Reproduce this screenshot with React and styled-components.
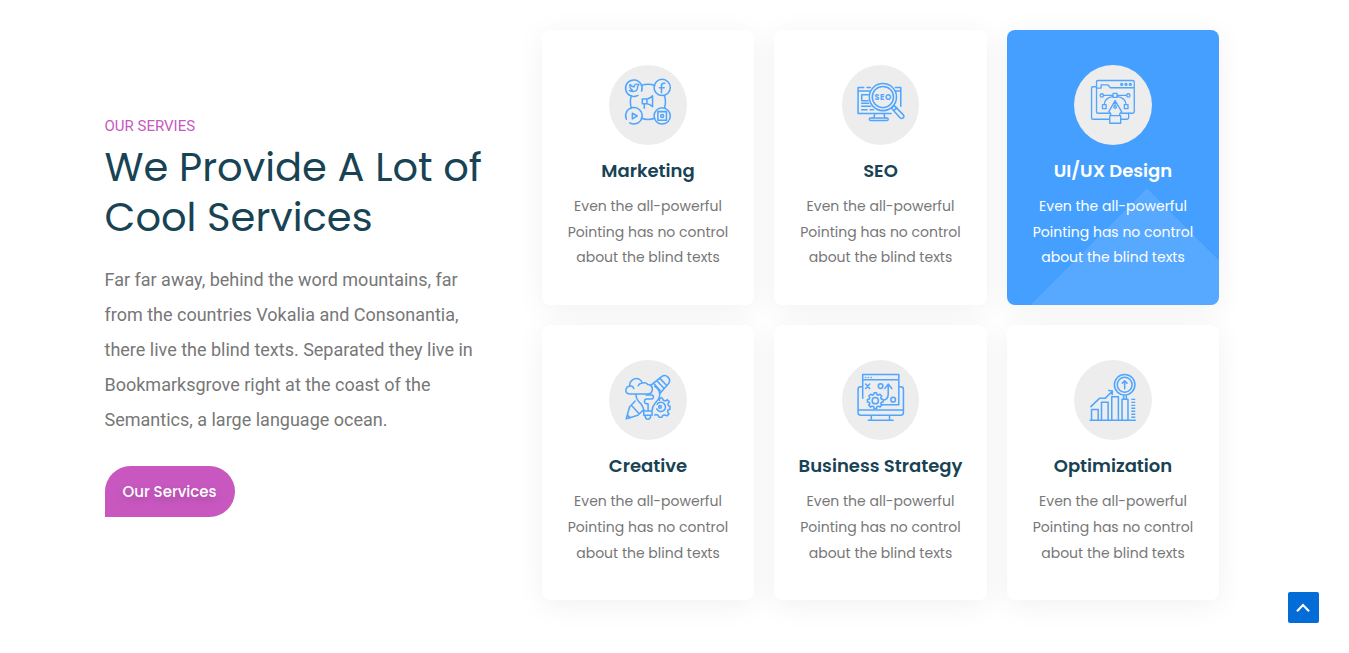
import React from "react";
import styled, { createGlobalStyle, css } from "styled-components";

const GlobalStyle = createGlobalStyle`
  * { box-sizing: border-box; }
  body { margin: 0; background: #fff; overflow: hidden; }
`;

const display = `Poppins, Inter, "Open Sans", sans-serif`;

const Page = styled.main`
  position: relative;
  height: 653px;
  overflow: hidden;
  padding: 30px 129.75px 0 104.5px;
  display: flex;
  justify-content: space-between;
`;

const Intro = styled.section`
  width: 390px;
  padding-top: 84px;
`;

const Eyebrow = styled.div`
  font: 400 15px/24px Roboto, sans-serif;
  color: #c858c0;
  white-space: nowrap;
`;

const Heading = styled.h2`
  margin: 4px 0 20px;
  font: 400 40px/50px ${display};
  color: #184354;
`;

const Line = styled.span`
  display: block;
  white-space: nowrap;
`;

const Lead = styled.p`
  margin: 0 0 29px;
  font: 400 18px/35px Roboto, sans-serif;
  color: #777;
`;

const ServicesButton = styled.button`
  display: block;
  width: 130px;
  height: 51px;
  padding: 0;
  border: 0;
  border-radius: 26px 26px 26px 0;
  background: #c858c0;
  color: #fff;
  font: 500 15px/51px ${display};
  text-shadow: 0 3px 8px rgba(0, 0, 0, 0.2);
  white-space: nowrap;
`;

const Grid = styled.section`
  display: grid;
  grid-template-columns: repeat(3, 212.5px);
  grid-auto-rows: 275.2px;
  gap: 20px;
  align-content: start;
`;

const Card = styled.article`
  position: relative;
  overflow: hidden;
  padding-top: 35px;
  display: flex;
  flex-direction: column;
  align-items: center;
  border-radius: 8px;
  background: #fff;
  color: #777;
  box-shadow: 0 5px 30px rgba(0, 0, 0, 0.06);
  ${(p) =>
    p.$active &&
    css`
      background: #459fff;
      color: #fff;
      &::before {
        content: "";
        position: absolute;
        left: 40.5px;
        top: 200px;
        width: 200px;
        height: 200px;
        transform: rotate(45deg);
        background: rgba(255, 255, 255, 0.1);
      }
    `}
`;

const IconDisc = styled.div`
  width: 77.5px;
  height: 80px;
  flex: none;
  border-radius: 50%;
  background: #ededed;
  svg { display: block; width: 77.5px; height: 80px; }
`;

const CardTitle = styled.h3`
  position: relative;
  margin: 12px 0 9px;
  font: 600 18px/28px ${display};
  white-space: nowrap;
  color: ${(p) => (p.$active ? "#fff" : "#184354")};
`;

const CardText = styled.p`
  position: relative;
  margin: 0;
  font: 400 14px/25.7px ${display};
  text-align: center;
`;

const ToTop = styled.button`
  position: absolute;
  right: 30px;
  bottom: 30px;
  width: 31px;
  height: 31px;
  padding: 0;
  border: 0;
  border-radius: 2px;
  background: #046cd6;
  svg { display: block; }
`;

const Glyph = ({ x, children }) => (
  <svg viewBox={`${x} 15 234 240`} fill="none" stroke="#4fa5ff" strokeWidth="4.6" strokeLinecap="round" strokeLinejoin="round">
    {children}
  </svg>
);

const gear = (cx, cy, r, depth, teeth) => {
  const pts = [];
  for (let i = 0; i < teeth; i++) {
    [[-0.32, r - depth], [-0.2, r], [0.2, r], [0.32, r - depth]].forEach(([o, d]) => {
      const a = ((i + o) / teeth) * Math.PI * 2;
      pts.push(`${(cx + d * Math.cos(a)).toFixed(1)} ${(cy + d * Math.sin(a)).toFixed(1)}`);
    });
  }
  return `M${pts.join("L")}Z`;
};

const MarketingIcon = () => (
  <Glyph x={26.5}>
    <path d="M114 106A25 25 0 1 1 125 93M124 76Q144 69 165 76M94 107Q88 126 94 144M194 107Q200 126 194 144M124 175Q144 182 165 175" />
    <circle cx="187" cy="82" r="24.5" />
    <circle cx="187" cy="168" r="24.5" />
    <path d="M79 178A25 25 0 1 1 89 189" />
    <path strokeWidth="4.2" d="M88 91q5 2 9-1-10-7-7-17 6 8 13 7 0-9 8-8l6 1-4 6q0 13-10 15-9 1-15-3Z" />
    <path d="M195 69h-3q-7 0-7 7v22M179 83h14" />
    <path d="M97 160v17l15-9ZM174 155h26v26h-26z" />
    <circle cx="187" cy="168" r="4.5" />
    <path d="M127 117h14v14h-14zM141 117q9-1 17-10v33q-8-8-17-9M133 131v14" />
  </Glyph>
);

const SeoIcon = () => (
  <Glyph x={28.5}>
    <path d="M94 82H77v79h100M104 82h10M190 82h16v57M77 93h36M189 93h17M109 104H88v18h19M88 130h21M88 139h27M88 149h16M114 149h9M128 161l-4 13M155 161l3 13" />
    <rect x="111" y="174" width="57" height="8" rx="4" />
    <circle cx="152" cy="111" r="41" />
    <circle cx="152" cy="111" r="32" />
    <path d="M178 145l8-8 27 27q5 6 0 10-5 4-10-1l-25-28ZM186 151l8-8" />
    <text x="153" y="119.5" textAnchor="middle" fill="#4fa5ff" stroke="none" fontFamily="Poppins, Inter, sans-serif" fontWeight="700" fontSize="24" letterSpacing="2">SEO</text>
  </Glyph>
);

const DesignIcon = () => (
  <Glyph x={30}>
    <path d="M97 80H87q-4 0-4 4v90q0 4 4 4h49M172 178h18q5 0 5-5v-13" strokeWidth="4" />
    <path d="M138 160h-36q-4 0-4-4V65q0-4 4-4h105q5 0 5 5v89q0 5-5 5h-34M98 84h14V74h20l8 9h72" strokeWidth="4" />
    <g strokeWidth="4">
      <circle cx="174" cy="73" r="3" /><circle cx="187" cy="73" r="3" /><circle cx="200" cy="73" r="3" />
      <circle cx="114" cy="106" r="5" /><circle cx="194" cy="106" r="5" />
      <path d="M119 106h29M161 106h28M148 100h12v12h-12zM148 109q-26 5-27 25M160 109q27 5 27 25M116 134h11v12h-11zM182 134h11v12h-11z" />
      <path d="M154 122l-19 33q7 5 7 12h25q0-7 7-12ZM154 122v15M138 167h33v23h-33z" />
      <circle cx="154" cy="141" r="4" />
    </g>
  </Glyph>
);

const CreativeIcon = () => (
  <Glyph x={27}>
    <path d="M89 117q-12-2-11-12 1-10 12-12-2-11 7-18 10-8 21-3 8 4 9 12 12-3 17 4 14 1 14 15-1 14-14 14ZM90 93q9-2 12 7M127 84q-9 1-12 8" />
    <path d="M153 91l32-26q11-8 20 1 9 9 2 19l-25 29M180 69l21 22M171 76l21 23M163 86l19 21" />
    <path d="M108 118q0 12 8 21 15 12 16 29h25q0-12 9-23 16-16 14-30-2-13-15-21M132 168h25v13h-25zM136 182q1 11 8 11 8 0 9-11" />
    <path d="M139 120h17q5 0 5 6t-5 6h-15q-7 0-7 7t7 7h4v21" />
    <path d="M106 138l-17 18-10 36 35-11 18-17M94 150l22 24M82 180l9 9" />
    <path d="M179 136l2-7h7l3 7 7 2 5-4 6 6-4 7 1 5 5 2v9l-6 2-1 6 4 6-6 6-7-3-6 2-2 5h-9l-3-6-6-2-4 1" />
    <path d="M172 148a14 14 0 1 1-1 14" />
    <circle cx="181" cy="156" r="4" />
  </Glyph>
);

const StrategyIcon = () => (
  <Glyph x={28.5}>
    <path d="M110 149h90V58H91v72M91 74h109M91 95h-7q-7 0-7 8v70q0 8 8 8h121q8 0 8-8v-70q0-8-8-8h-6M77 165h137M117 182v13M172 182v13M108 196h75" />
    <path d="M99 67h1M107 67h1M116 67h1" strokeWidth="4" />
    <path d="M100 87l12 13M112 87l-12 13" />
    <circle cx="145" cy="93" r="7" /><circle cx="183" cy="134" r="7" />
    <path d="M153 136q15-2 15-18V88M158 100l10-13 11 13" />
    <path d={gear(129, 137, 24, 5, 8)} fill="#ededed" />
    <circle cx="129" cy="137" r="9.5" />
  </Glyph>
);

const OptimizationIcon = () => (
  <Glyph x={30}>
    <path d="M79 196h136M83 195v-31h20v31M113 195v-53h20v53M144 195v-70h20v70M175 195v-62h18v62M180 133v-10M188 133v-10" />
    <path d="M81 155l26-25h17l20-20M135 106l11 2-1 11" />
    <circle cx="183" cy="89" r="31" /><circle cx="183" cy="89" r="22.5" />
    <path d="M183 101V78M176 84l7-7 7 7" />
    <path d="M203 133h12M203 142h12M203 151h12M203 160h12M203 169h12M203 178h12M203 187h12" strokeWidth="4" strokeLinecap="butt" />
  </Glyph>
);

const services = [
  { title: "Marketing", Icon: MarketingIcon },
  { title: "SEO", Icon: SeoIcon },
  { title: "UI/UX Design", Icon: DesignIcon, active: true },
  { title: "Creative", Icon: CreativeIcon },
  { title: "Business Strategy", Icon: StrategyIcon },
  { title: "Optimization", Icon: OptimizationIcon },
];

const leadLines = [
  "Far far away, behind the word mountains, far",
  "from the countries Vokalia and Consonantia,",
  "there live the blind texts. Separated they live in",
  "Bookmarksgrove right at the coast of the",
  "Semantics, a large language ocean.",
];

export default function App() {
  return (
    <Page>
      <GlobalStyle />
      <Intro>
        <Eyebrow>OUR SERVIES</Eyebrow>
        <Heading>
          <Line>We Provide A Lot of</Line>
          <Line>Cool Services</Line>
        </Heading>
        <Lead>
          {leadLines.map((l) => (
            <Line key={l}>{l}</Line>
          ))}
        </Lead>
        <ServicesButton>Our Services</ServicesButton>
      </Intro>
      <Grid>
        {services.map(({ title, Icon, active }) => (
          <Card key={title} $active={active}>
            <IconDisc>
              <Icon />
            </IconDisc>
            <CardTitle $active={active}>{title}</CardTitle>
            <CardText>
              <Line>Even the all-powerful</Line>
              <Line>Pointing has no control</Line>
              <Line>about the blind texts</Line>
            </CardText>
          </Card>
        ))}
      </Grid>
      <ToTop aria-label="Back to top">
        <svg width="31" height="31" viewBox="0 0 31 31" fill="none" stroke="#fff" strokeWidth="2.2">
          <path d="M9 19.2l6-6.2 6 6.2" />
        </svg>
      </ToTop>
    </Page>
  );
}
